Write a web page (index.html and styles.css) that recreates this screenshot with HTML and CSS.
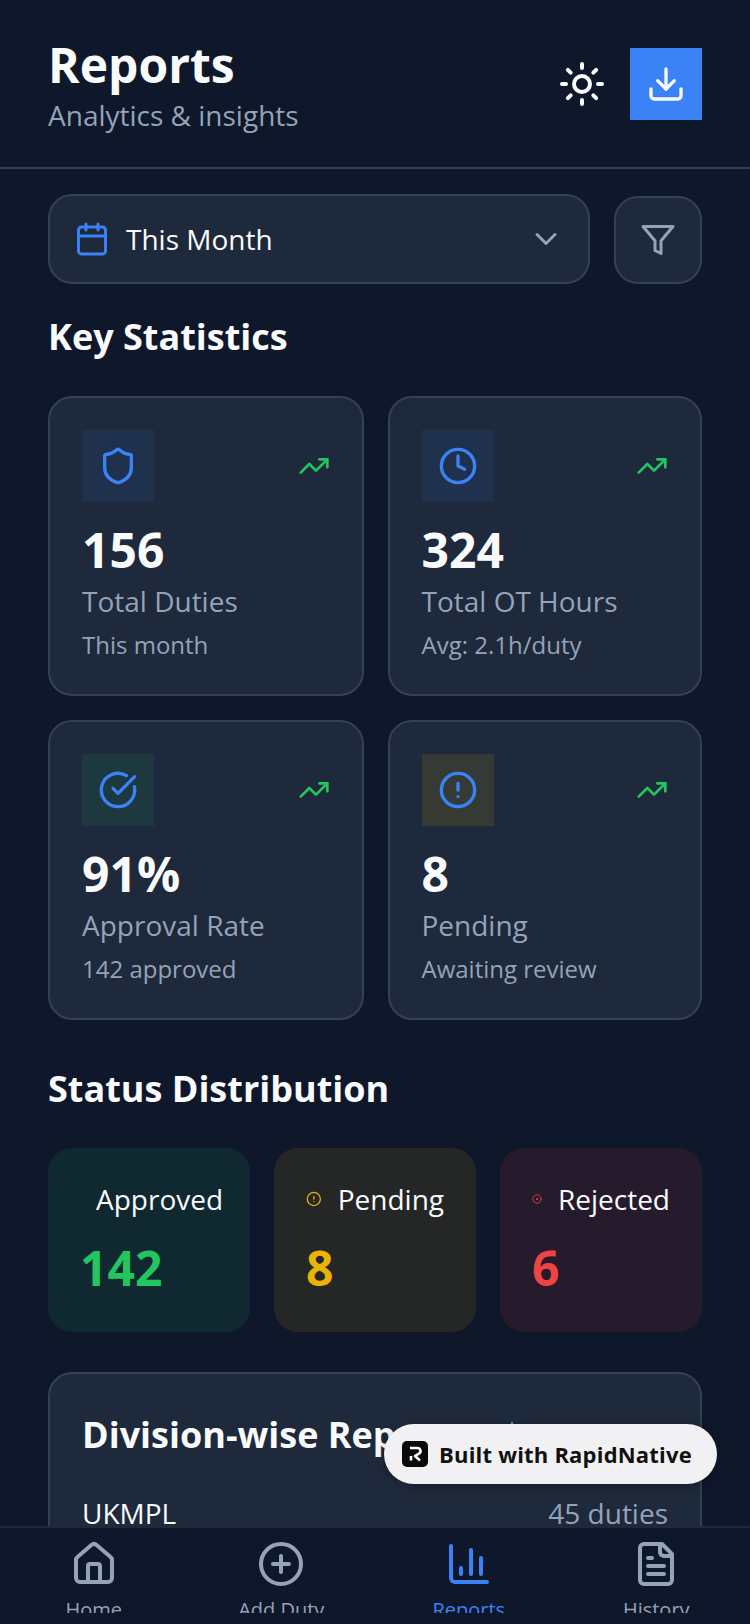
FILE: index.html
```html
<!DOCTYPE html>
<html lang="en">
  <head>
    <meta charset="UTF-8" />
    <meta name="viewport" content="width=device-width, initial-scale=1.0" />
    <title>Reports</title>
    <link rel="stylesheet" href="styles.css">
  </head>
  <body>
    <div class="app">
      <header class="header">
        <div>
          <h1 class="title">Reports</h1>
          <p class="subtitle">Analytics &amp; insights</p>
        </div>
        <div class="header-actions">
          <svg class="icon icon-48 sun" viewBox="0 0 24 24">
            <circle cx="12" cy="12" r="4" />
            <path d="M12 2v2M12 20v2M4.93 4.93l1.41 1.41M17.66 17.66l1.41 1.41M2 12h2M20 12h2M6.34 17.66l-1.41 1.41M19.07 4.93l-1.41 1.41" />
          </svg>
          <button class="export-btn">
            <svg class="icon icon-40" viewBox="0 0 24 24">
              <path d="M21 15v4a2 2 0 0 1-2 2H5a2 2 0 0 1-2-2v-4" />
              <path d="M7 10l5 5 5-5" />
              <path d="M12 15V3" />
            </svg>
          </button>
        </div>
      </header>

      <main class="content">
        <div class="filters">
          <div class="period-select">
            <svg class="icon icon-36 blue" viewBox="0 0 24 24">
              <path d="M8 2v4M16 2v4M3 10h18" />
              <rect x="3" y="4" width="18" height="18" rx="2" />
            </svg>
            <span class="period-text">This Month</span>
            <svg class="icon icon-36 muted" viewBox="0 0 24 24">
              <path d="M6 9l6 6 6-6" />
            </svg>
          </div>
          <button class="filter-btn">
            <svg class="icon icon-36 muted" viewBox="0 0 24 24">
              <path d="M22 3H2l8 9.46V19l4 2v-8.54L22 3z" />
            </svg>
          </button>
        </div>

        <h2 class="section-title first">Key Statistics</h2>
        <div class="stats-grid">
          <div class="stat-card">
            <div class="stat-top">
              <div class="stat-icon tint-blue">
                <svg class="icon icon-40 blue" viewBox="0 0 24 24">
                  <path d="M20 13c0 5-3.5 7.5-7.66 8.95a1 1 0 0 1-.67-.01C7.5 20.5 4 18 4 13V6a1 1 0 0 1 1-1c2 0 4.5-1.2 6.24-2.72a1.17 1.17 0 0 1 1.52 0C14.51 3.81 17 5 19 5a1 1 0 0 1 1 1z" />
                </svg>
              </div>
              <svg class="icon icon-32 green" viewBox="0 0 24 24">
                <path d="M22 7l-8.5 8.5-5-5L2 17" />
                <path d="M16 7h6v6" />
              </svg>
            </div>
            <div class="stat-value">156</div>
            <div class="stat-label">Total Duties</div>
            <div class="stat-note">This month</div>
          </div>

          <div class="stat-card">
            <div class="stat-top">
              <div class="stat-icon tint-blue">
                <svg class="icon icon-40 blue" viewBox="0 0 24 24">
                  <circle cx="12" cy="12" r="10" />
                  <path d="M12 6v6l4 2" />
                </svg>
              </div>
              <svg class="icon icon-32 green" viewBox="0 0 24 24">
                <path d="M22 7l-8.5 8.5-5-5L2 17" />
                <path d="M16 7h6v6" />
              </svg>
            </div>
            <div class="stat-value">324</div>
            <div class="stat-label">Total OT Hours</div>
            <div class="stat-note">Avg: 2.1h/duty</div>
          </div>

          <div class="stat-card">
            <div class="stat-top">
              <div class="stat-icon tint-green">
                <svg class="icon icon-40 blue" viewBox="0 0 24 24">
                  <path d="M21.801 10A10 10 0 1 1 17 3.335" />
                  <path d="M9 11l3 3L22 4" />
                </svg>
              </div>
              <svg class="icon icon-32 green" viewBox="0 0 24 24">
                <path d="M22 7l-8.5 8.5-5-5L2 17" />
                <path d="M16 7h6v6" />
              </svg>
            </div>
            <div class="stat-value">91%</div>
            <div class="stat-label">Approval Rate</div>
            <div class="stat-note">142 approved</div>
          </div>

          <div class="stat-card">
            <div class="stat-top">
              <div class="stat-icon tint-amber">
                <svg class="icon icon-40 blue" viewBox="0 0 24 24">
                  <circle cx="12" cy="12" r="10" />
                  <path d="M12 8v4M12 16h.01" />
                </svg>
              </div>
              <svg class="icon icon-32 green" viewBox="0 0 24 24">
                <path d="M22 7l-8.5 8.5-5-5L2 17" />
                <path d="M16 7h6v6" />
              </svg>
            </div>
            <div class="stat-value">8</div>
            <div class="stat-label">Pending</div>
            <div class="stat-note">Awaiting review</div>
          </div>
        </div>

        <h2 class="section-title second">Status Distribution</h2>
        <div class="status-row">
          <div class="status-card approved">
            <div class="status-head">
              <svg class="icon status-icon" viewBox="0 0 24 24">
                <path d="M21.801 10A10 10 0 1 1 17 3.335" />
                <path d="M9 11l3 3L22 4" />
              </svg>
              <span class="status-label">Approved</span>
            </div>
            <div class="status-value">142</div>
          </div>
          <div class="status-card pending">
            <div class="status-head">
              <svg class="icon status-icon" viewBox="0 0 24 24">
                <circle cx="12" cy="12" r="10" />
                <path d="M12 8v4M12 16h.01" />
              </svg>
              <span class="status-label">Pending</span>
            </div>
            <div class="status-value">8</div>
          </div>
          <div class="status-card rejected">
            <div class="status-head">
              <svg class="icon status-icon" viewBox="0 0 24 24">
                <circle cx="12" cy="12" r="10" />
                <path d="M14 10l-4 4M10 10l4 4" />
              </svg>
              <span class="status-label">Rejected</span>
            </div>
            <div class="status-value">6</div>
          </div>
        </div>

        <section class="division-card">
          <div class="division-head">
            <h2 class="division-title">Division-wise Report</h2>
            <div class="division-link">
              <svg class="icon icon-32" viewBox="0 0 24 24">
                <path d="M3 3v16a2 2 0 0 0 2 2h16" />
                <path d="M18 17V9M13 17V5M8 17v-3" />
              </svg>
              <span>View Chart</span>
            </div>
          </div>
          <div class="division-row">
            <span class="division-name">UKMPL</span>
            <span class="division-count">45 duties</span>
          </div>
        </section>
      </main>

      <nav class="tabbar">
        <div class="tab">
          <svg class="icon icon-48" viewBox="0 0 24 24">
            <path d="M15 21v-8a1 1 0 0 0-1-1h-4a1 1 0 0 0-1 1v8" />
            <path d="M3 10a2 2 0 0 1 .709-1.528l7-5.999a2 2 0 0 1 2.582 0l7 5.999A2 2 0 0 1 21 10v9a2 2 0 0 1-2 2H5a2 2 0 0 1-2-2z" />
          </svg>
          <span class="tab-label">Home</span>
        </div>
        <div class="tab">
          <svg class="icon icon-48" viewBox="0 0 24 24">
            <circle cx="12" cy="12" r="10" />
            <path d="M8 12h8M12 8v8" />
          </svg>
          <span class="tab-label">Add Duty</span>
        </div>
        <div class="tab active">
          <svg class="icon icon-48" viewBox="0 0 24 24">
            <path d="M3 3v16a2 2 0 0 0 2 2h16" />
            <path d="M18 17V9M13 17V5M8 17v-3" />
          </svg>
          <span class="tab-label">Reports</span>
        </div>
        <div class="tab">
          <svg class="icon icon-48" viewBox="0 0 24 24">
            <path d="M15 2H6a2 2 0 0 0-2 2v16a2 2 0 0 0 2 2h12a2 2 0 0 0 2-2V7z" />
            <path d="M14 2v4a2 2 0 0 0 2 2h4" />
            <path d="M10 9H8M16 13H8M16 17H8" />
          </svg>
          <span class="tab-label">History</span>
        </div>
      </nav>

      <div class="built-badge">
        <svg class="badge-logo" viewBox="0 0 26 26">
          <rect width="26" height="26" rx="5" fill="#0a0a0a" />
          <path d="M8 7h7.5a3 3 0 0 1 1.8 5.4L13 15l5 4.5M9 15v4.5" fill="none" stroke="#fff" stroke-width="2.6" stroke-linejoin="round" />
        </svg>
        <span>Built with RapidNative</span>
      </div>
    </div>
  </body>
</html>
```

FILE: styles.css
```css
* {
  box-sizing: border-box;
}

html,
body {
  margin: 0;
  height: 100%;
}

body {
  background: #0f172a;
  font-family: "Open Sans", "Noto Sans", sans-serif;
  color: #f8fafc;
}

h1,
h2,
p {
  margin: 0;
}

button {
  border: none;
  padding: 0;
  cursor: pointer;
}

/* Shared icon look */
.icon {
  display: block;
  flex-shrink: 0;
  fill: none;
  stroke: currentColor;
  stroke-width: 2;
  stroke-linecap: round;
  stroke-linejoin: round;
}

.icon-32 {
  width: 32px;
  height: 32px;
}

.icon-36 {
  width: 36px;
  height: 36px;
}

.icon-40 {
  width: 40px;
  height: 40px;
}

.icon-48 {
  width: 48px;
  height: 48px;
}

.blue {
  color: #3b82f6;
}

.green {
  color: #22c55e;
}

.muted {
  color: #94a3b8;
}

.app {
  position: relative;
  display: flex;
  flex-direction: column;
  height: 1624px;
  overflow: hidden;
}

/* Header */
.header {
  display: flex;
  justify-content: space-between;
  align-items: flex-start;
  padding: 32px 48px 33px;
  border-bottom: 2px solid #334155;
}

.title {
  font-size: 48px;
  font-weight: 700;
}

.subtitle {
  margin-top: -1px;
  font-size: 28px;
  color: #94a3b8;
}

.header-actions {
  display: flex;
  align-items: center;
  gap: 24px;
  margin-top: 16px;
}

.sun {
  color: #f8fafc;
}

.export-btn {
  display: flex;
  justify-content: center;
  align-items: center;
  width: 72px;
  height: 72px;
  background: #3b82f6;
  color: #f8fafc;
}

/* Main scroll area */
.content {
  flex: 1;
  min-height: 0;
  overflow: hidden;
  padding: 25px 48px 0;
}

.filters {
  display: flex;
  align-items: flex-end;
  gap: 24px;
}

.period-select {
  flex: 1;
  display: flex;
  align-items: center;
  gap: 16px;
  padding: 24px;
  background: #1e293b;
  border: 2px solid #334155;
  border-radius: 24px;
}

.period-text {
  flex: 1;
  font-size: 28px;
}

.filter-btn {
  padding: 24px;
  background: #1e293b;
  border: 2px solid #334155;
  border-radius: 24px;
}

.section-title {
  font-size: 36px;
  font-weight: 700;
}

.section-title.first {
  margin: 28px 0 35px;
}

.section-title.second {
  margin: 44px 0 35px;
}

/* Key statistics */
.stats-grid {
  display: grid;
  grid-template-columns: 315.5px 314.5px;
  gap: 24px;
}

.stat-card {
  padding: 32px 32px 33px;
  background: #1e293b;
  border: 2px solid #334155;
  border-radius: 24px;
}

.stat-top {
  display: flex;
  justify-content: space-between;
  align-items: center;
  margin-bottom: 15px;
}

.stat-icon {
  display: flex;
  justify-content: center;
  align-items: center;
  width: 72px;
  height: 72px;
}

.tint-blue {
  background: rgba(59, 130, 246, 0.1);
}

.tint-green {
  background: rgba(34, 197, 94, 0.1);
}

.tint-amber {
  background: rgba(234, 179, 8, 0.12);
}

.stat-value {
  font-size: 48px;
  font-weight: 700;
}

.stat-label {
  font-size: 28px;
  color: #94a3b8;
}

.stat-note {
  margin-top: 8px;
  font-size: 24px;
  color: #94a3b8;
}

/* Status distribution */
.status-row {
  display: flex;
  gap: 24px;
}

.status-card {
  flex: 1;
  min-width: 0;
  padding: 32px;
  border-radius: 24px;
}

.status-head {
  display: flex;
  align-items: center;
  gap: 16px;
  margin-bottom: 17px;
}

.status-icon {
  flex-shrink: 1;
  min-width: 0;
  width: 16px;
  height: 16px;
}

.status-label {
  flex-shrink: 0;
  font-size: 28px;
  color: #f8fafc;
}

.status-value {
  font-size: 48px;
  font-weight: 700;
}

.approved {
  background: rgba(34, 197, 94, 0.1);
  color: #22c55e;
}

.pending {
  background: rgba(234, 179, 8, 0.1);
  color: #eab308;
}

.rejected {
  background: rgba(239, 68, 68, 0.1);
  color: #ef4444;
}

/* Division card, runs under the tab bar */
.division-card {
  margin-top: 40px;
  padding: 32px;
  background: #1e293b;
  border: 2px solid #334155;
  border-radius: 24px;
}

.division-head {
  display: flex;
  justify-content: space-between;
  align-items: center;
  min-height: 57px;
  margin-bottom: 31px;
}

.division-title {
  font-size: 36px;
  font-weight: 700;
}

.division-link {
  display: flex;
  align-items: center;
  gap: 8px;
  font-size: 24px;
  color: #3b82f6;
}

.division-row {
  display: flex;
  justify-content: space-between;
  align-items: center;
  font-size: 28px;
}

.division-count {
  color: #94a3b8;
}

/* Bottom tabs */
.tabbar {
  display: grid;
  grid-template-columns: repeat(4, 1fr);
  height: 98px;
  padding-top: 12px;
  background: #0f172a;
  border-top: 2px solid #1e293b;
}

.tab {
  display: flex;
  flex-direction: column;
  align-items: center;
  gap: 8px;
  height: 73px;
  overflow: hidden;
  color: #94a3b8;
}

.tab-label {
  font-size: 20px;
}

.tab.active {
  color: #3b82f6;
}

/* Floating badge */
.built-badge {
  position: absolute;
  left: 384px;
  top: 1424px;
  display: flex;
  align-items: center;
  gap: 11px;
  height: 60px;
  padding: 0 25px 0 18px;
  background: #f1f1f4;
  border-radius: 30px;
  box-shadow: 0 2px 10px rgba(0, 0, 0, 0.25);
  color: #111;
  font-size: 22px;
  font-weight: 700;
  letter-spacing: 0.2px;
}

.badge-logo {
  display: block;
  width: 26px;
  height: 26px;
}
```
